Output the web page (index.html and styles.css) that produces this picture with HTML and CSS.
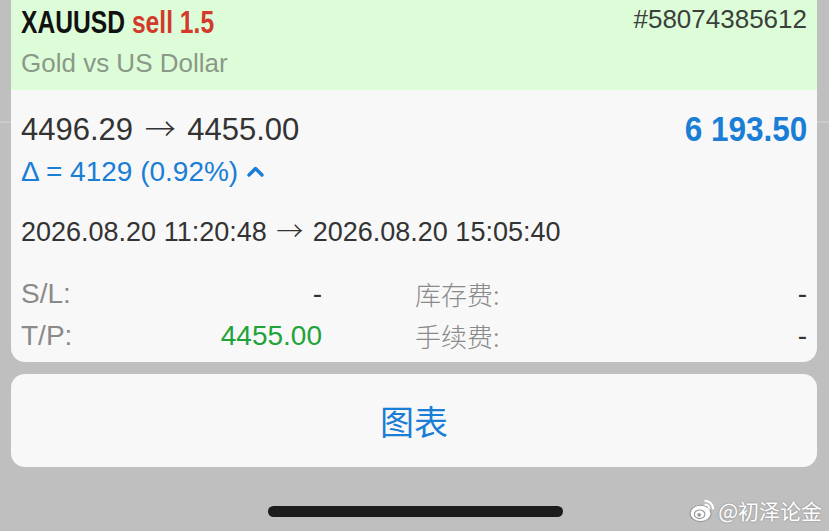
FILE: index.html
```html
<!DOCTYPE html>
<html lang="en">
<head>
    <meta charset="UTF-8">
    <title>Position details</title>
    <link rel="stylesheet" href="styles.css">
</head>
<body>
    <div class="sheet">
        <!-- Position card -->
        <div class="card">
            <div class="card-head">
                <div class="head-row">
                    <div class="title">
                        <span class="symbol">XAUUSD</span>
                        <span class="side">sell 1.5</span>
                    </div>
                    <div class="order-id">#58074385612</div>
                </div>
                <div class="subtitle">Gold vs US Dollar</div>
            </div>

            <div class="card-body">
                <div class="price-row">
                    <div class="prices">4496.29 <span class="arrow">→</span> 4455.00</div>
                    <div class="profit">6 193.50</div>
                </div>
                <div class="delta">
                    Δ = 4129 (0.92%)
                    <svg class="chevron" width="17" height="12" viewBox="0 0 17 12">
                        <path d="M2 10 L8.5 3.5 L15 10" fill="none" stroke="#1a7ed6" stroke-width="3.4" stroke-linecap="round" stroke-linejoin="round"/>
                    </svg>
                </div>
                <div class="times">2026.08.20 11:20:48 <span class="arrow">→</span> 2026.08.20 15:05:40</div>

                <div class="stats">
                    <div class="stat">
                        <span class="label">S/L:</span>
                        <span class="value">-</span>
                    </div>
                    <div class="stat">
                        <span class="label cjk">库存费:</span>
                        <span class="value">-</span>
                    </div>
                    <div class="stat">
                        <span class="label">T/P:</span>
                        <span class="value green">4455.00</span>
                    </div>
                    <div class="stat">
                        <span class="label cjk">手续费:</span>
                        <span class="value">-</span>
                    </div>
                </div>
            </div>
        </div>

        <div class="chart-btn">图表</div>

        <div class="home-bar"></div>
    </div>

    <!-- Watermark -->
    <div class="watermark">
        <svg width="27" height="25" viewBox="0 0 28 26">
            <ellipse cx="12" cy="16" rx="11" ry="8.5" fill="#ffffff" stroke="#9a9a9a" stroke-width="1.2"/>
            <ellipse cx="11" cy="17" rx="5.5" ry="4.5" fill="none" stroke="#9a9a9a" stroke-width="1.2"/>
            <circle cx="10.5" cy="17.5" r="2" fill="#9a9a9a"/>
            <path d="M17 3 A8 8 0 0 1 25 11" fill="none" stroke="#ffffff" stroke-width="2.2" stroke-linecap="round"/>
            <path d="M17 7 A4 4 0 0 1 21 11" fill="none" stroke="#ffffff" stroke-width="2" stroke-linecap="round"/>
        </svg>
        <span>@初泽论金</span>
    </div>
</body>
</html>
```

FILE: styles.css
```css
body {
    margin: 0;
    height: 531px;
    overflow: hidden;
    position: relative;
    font-family: "Liberation Sans", Arial, sans-serif;
    background: linear-gradient(to bottom, #bfbfbf 121px, #cbcbcb 121px, #cbcbcb 123px, #bfbfbf 123px);
}
.sheet {
    padding: 0 12px 0 11px;
}
.card {
    background-color: #f8f8f8;
    border-radius: 0 0 14px 14px;
    overflow: hidden;
}
.card-head {
    background-color: #ddfdd9;
    padding: 3px 10px 11px 10px;
}
.head-row {
    display: flex;
    justify-content: space-between;
    align-items: flex-start;
}
/* condensed bold: no narrow face installed, so squeeze Liberation Sans */
.title {
    font-weight: bold;
    font-size: 32px;
    line-height: 38px;
    white-space: nowrap;
    transform: scaleX(0.77);
    transform-origin: left center;
}
.symbol {
    color: #111111;
}
.side {
    color: #d33a2b;
}
.order-id {
    font-size: 26px;
    line-height: 30px;
    color: #3a403a;
    margin-top: 1px;
}
.subtitle {
    font-size: 26px;
    line-height: 32px;
    color: #8a9888;
    margin-top: 6px;
}
.card-body {
    padding: 19px 10px 5px 10px;
}
.price-row {
    display: flex;
    justify-content: space-between;
    align-items: flex-start;
}
.prices {
    font-size: 31px;
    line-height: 36px;
    color: #333333;
}
.arrow {
    font-family: "Noto Sans CJK SC", sans-serif;
    font-weight: 300;
    margin: 0 3px;
}
.profit {
    font-weight: bold;
    font-size: 35px;
    line-height: 40px;
    color: #1a7ed6;
    white-space: nowrap;
    transform: scaleX(0.9);
    transform-origin: right center;
}
.delta {
    font-size: 28px;
    line-height: 30px;
    color: #1a7ed6;
    margin-top: 8px;
    display: flex;
    align-items: center;
    gap: 9px;
}
.chevron {
    margin-top: -2px;
}
.times {
    font-size: 27px;
    line-height: 34px;
    color: #333333;
    margin-top: 26px;
}
.times .arrow {
    margin: 0 2px;
}
.stats {
    display: grid;
    grid-template-columns: 301px 1fr;
    column-gap: 93px;
    margin-top: 24px;
}
.stat {
    display: flex;
    justify-content: space-between;
    font-size: 28px;
    line-height: 42px;
}
.label {
    color: #8a8a8a;
}
.label.cjk {
    font-family: "Noto Sans CJK SC", sans-serif;
    font-weight: 300;
    font-size: 26px;
}
.value {
    color: #333333;
}
.value.green {
    color: #22a33a;
}
.chart-btn {
    margin-top: 12px;
    height: 93px;
    background-color: #f8f8f8;
    border-radius: 14px;
    display: flex;
    align-items: center;
    justify-content: center;
    font-family: "Noto Sans CJK SC", sans-serif;
    font-size: 34px;
    color: #1a7ed6;
}
.home-bar {
    width: 295px;
    height: 11px;
    margin: 39px auto 0 auto;
    background-color: #1c1c1c;
    border-radius: 6px;
    position: relative;
    left: 1px;
}
.watermark {
    position: absolute;
    right: 7px;
    bottom: 6px;
    display: flex;
    align-items: center;
    gap: 2px;
    font-family: "Noto Sans CJK SC", sans-serif;
    font-size: 21px;
    color: #ffffff;
    text-shadow: 0 0 2px rgba(0, 0, 0, 0.35);
}
```
